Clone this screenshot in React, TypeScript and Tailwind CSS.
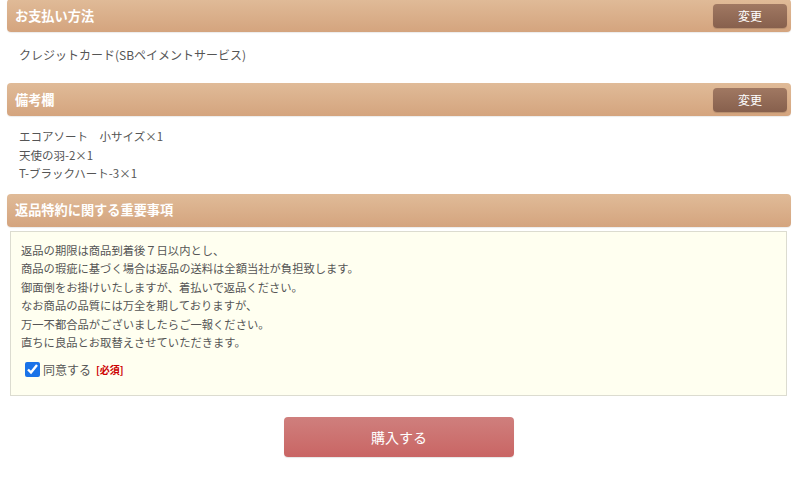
import React from "react";

const font = { fontFamily: '"Noto Sans CJK JP", "Noto Sans", sans-serif' };

function Header({ title, button }: { title: string; button?: boolean }) {
  return (
    <div className="h-[33px] rounded-[4px] bg-gradient-to-b from-[#e0bb98] to-[#d4a47e] flex items-center justify-between pl-[8px] pr-[4px] shadow-[0_1px_1px_rgba(0,0,0,0.08)]">
      <span className="text-white text-[13.2px] font-bold leading-none">{title}</span>
      {button && (
        <button className="w-[74px] h-[24px] rounded-[4px] bg-gradient-to-b from-[#a07862] to-[#87604d] text-white text-[12px] leading-none shadow-[0_1px_1px_rgba(0,0,0,0.15)]">
          変更
        </button>
      )}
    </div>
  );
}

export default function App() {
  return (
    <div style={font} className="w-[800px] h-[478px] bg-white pl-[7px] pr-[9px] overflow-hidden text-[#555]">
      <div className="-mt-[1px]">
        <Header title="お支払い方法" button />
      </div>
      <div className="pl-[12px] pt-[14px] pb-[19px] text-[12px] leading-[18px] text-[#555]">
        クレジットカード(SBペイメントサービス)
      </div>
      <Header title="備考欄" button />
      <div className="pl-[12px] pt-[11px] pb-[11px] text-[11.5px] leading-[18.5px] text-[#555]">
        <div>エコアソート　小サイズ×1</div>
        <div>天使の羽-2×1</div>
        <div>T-ブラックハート-3×1</div>
      </div>
      <Header title="返品特約に関する重要事項" />
      <div className="mt-[4px] ml-[3px] mr-[4px] border border-[#dcdcd0] bg-[#fffff0] pl-[10px] pt-[9px] pb-[16px] text-[11.3px] leading-[18.5px] text-[#555]">
        <div>返品の期限は商品到着後７日以内とし、</div>
        <div>商品の瑕疵に基づく場合は返品の送料は全額当社が負担致します。</div>
        <div>御面倒をお掛けいたしますが、着払いで返品ください。</div>
        <div>なお商品の品質には万全を期しておりますが、</div>
        <div>万一不都合品がございましたらご一報ください。</div>
        <div>直ちに良品とお取替えさせていただきます。</div>
        <label className="flex items-center mt-[9px] ml-[4px]">
          <input type="checkbox" defaultChecked className="w-[15px] h-[15px] m-0 accent-[#1a73e8]" />
          <span className="ml-[3px] text-[12px]">同意する</span>
          <span className="ml-[5px] text-[10px] font-bold text-[#cc0000]">[必須]</span>
        </label>
      </div>
      <div className="flex justify-center pt-[21px]">
        <button className="w-[230px] h-[40px] rounded-[4px] bg-gradient-to-b from-[#cf7f7d] to-[#c96564] text-white text-[14px] leading-none shadow-[0_1px_1px_rgba(0,0,0,0.1)]">
          購入する
        </button>
      </div>
    </div>
  );
}
